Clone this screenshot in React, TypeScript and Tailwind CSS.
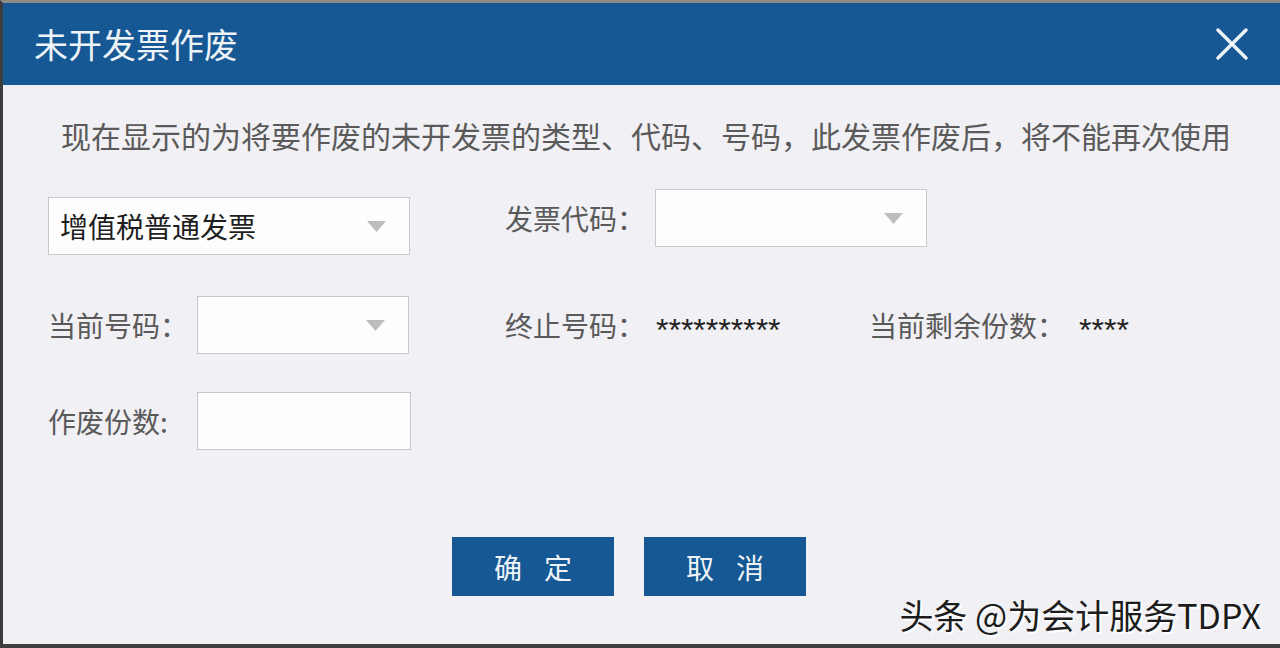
import React from "react";

const cjk = { fontFamily: '"Noto Sans CJK SC", "Noto Sans", sans-serif' };

function Caret() {
  return (
    <svg width="19" height="11" viewBox="0 0 19 11" className="shrink-0">
      <path d="M0 0 L19 0 L9.5 11 Z" fill="#bdbdbd" />
    </svg>
  );
}

function Select({ w, text }: { w: string; text?: string }) {
  return (
    <div
      className={`${w} h-[58px] border border-[#c9c9c9] bg-[#fdfdfd] flex items-center justify-between pl-[11px] pr-[23px]`}
    >
      <span className="text-[28px] leading-none text-[#1e1e1e]">{text ?? ""}</span>
      <Caret />
    </div>
  );
}

export default function App() {
  return (
    <div
      className="w-[1280px] h-[648px] flex flex-col border-t-[3px] border-t-[#8d8c84] border-l-[3px] border-l-[#3d3d3d] border-b-[4px] border-b-[#3f3f3f] overflow-hidden"
      style={cjk}
    >
      <div className="h-[82px] bg-[#165894] flex items-center justify-between pl-[31px] pr-[32px] shrink-0">
        <span className="text-[34px] leading-none text-[#eef3f8]">未开发票作废</span>
        <svg width="32" height="32" viewBox="0 0 32 32">
          <path d="M2 2 L30 30 M30 2 L2 30" stroke="#eef3f8" strokeWidth="3.4" strokeLinecap="round" />
        </svg>
      </div>
      <div className="flex-1 bg-[#f1f0f4] relative flex flex-col">
        <div className="pt-[35px] pl-[58px] h-[65px] text-[30px] leading-[30px] text-[#5a5a5a] whitespace-nowrap">
          现在显示的为将要作废的未开发票的类型、代码、号码，此发票作废后，将不能再次使用
        </div>

        <div className="mt-[39px] flex pl-[45px] h-[66px]">
          <div className="w-[457px] pt-[8px]">
            <Select w="w-[362px]" text="增值税普通发票" />
          </div>
          <div className="flex items-start">
            <div className="w-[150px] h-[58px] flex items-center text-[28px] leading-none text-[#5a5a5a]">
              发票代码：
            </div>
            <Select w="w-[272px]" />
          </div>
        </div>

        <div className="mt-[41px] flex pl-[45px] h-[58px] items-center">
          <div className="w-[457px] flex items-center">
            <div className="w-[149px] text-[28px] leading-none text-[#5a5a5a]">当前号码：</div>
            <Select w="w-[212px]" />
          </div>
          <div className="w-[364px] flex items-center">
            <span className="w-[151px] text-[28px] leading-none text-[#5a5a5a]">终止号码：</span>
            <span
              className="text-[32px] leading-none text-[#222] pt-[10px]"
              style={{ fontFamily: '"Liberation Sans", sans-serif' }}
            >
              **********
            </span>
          </div>
          <div className="flex items-center">
            <span className="text-[28px] leading-none text-[#5a5a5a]">当前剩余份数：</span>
            <span
              className="ml-[14px] text-[32px] leading-none text-[#222] pt-[10px]"
              style={{ fontFamily: '"Liberation Sans", sans-serif' }}
            >
              ****
            </span>
          </div>
        </div>

        <div className="mt-[38px] flex pl-[45px] h-[58px] items-center">
          <div className="w-[149px] text-[28px] leading-none text-[#5a5a5a]">作废份数:</div>
          <div className="w-[214px] h-[58px] border border-[#c9c9c9] bg-[#fdfdfd]" />
        </div>

        <div className="mt-[87px] flex pl-[449px] gap-[30px]">
          <button className="w-[162px] h-[59px] bg-[#165894] flex items-center justify-center gap-[22px] text-[28px] leading-none text-[#eef3f8]">
            <span>确</span>
            <span>定</span>
          </button>
          <button className="w-[162px] h-[59px] bg-[#165894] flex items-center justify-center gap-[22px] text-[28px] leading-none text-[#eef3f8]">
            <span>取</span>
            <span>消</span>
          </button>
        </div>

        <div className="absolute right-[19px] bottom-[12px] text-[34px] leading-none text-[#1c1c1c] whitespace-nowrap [text-shadow:2px_2px_0_#ffffff]">
          头条 @为会计服务TDPX
        </div>
      </div>
    </div>
  );
}
